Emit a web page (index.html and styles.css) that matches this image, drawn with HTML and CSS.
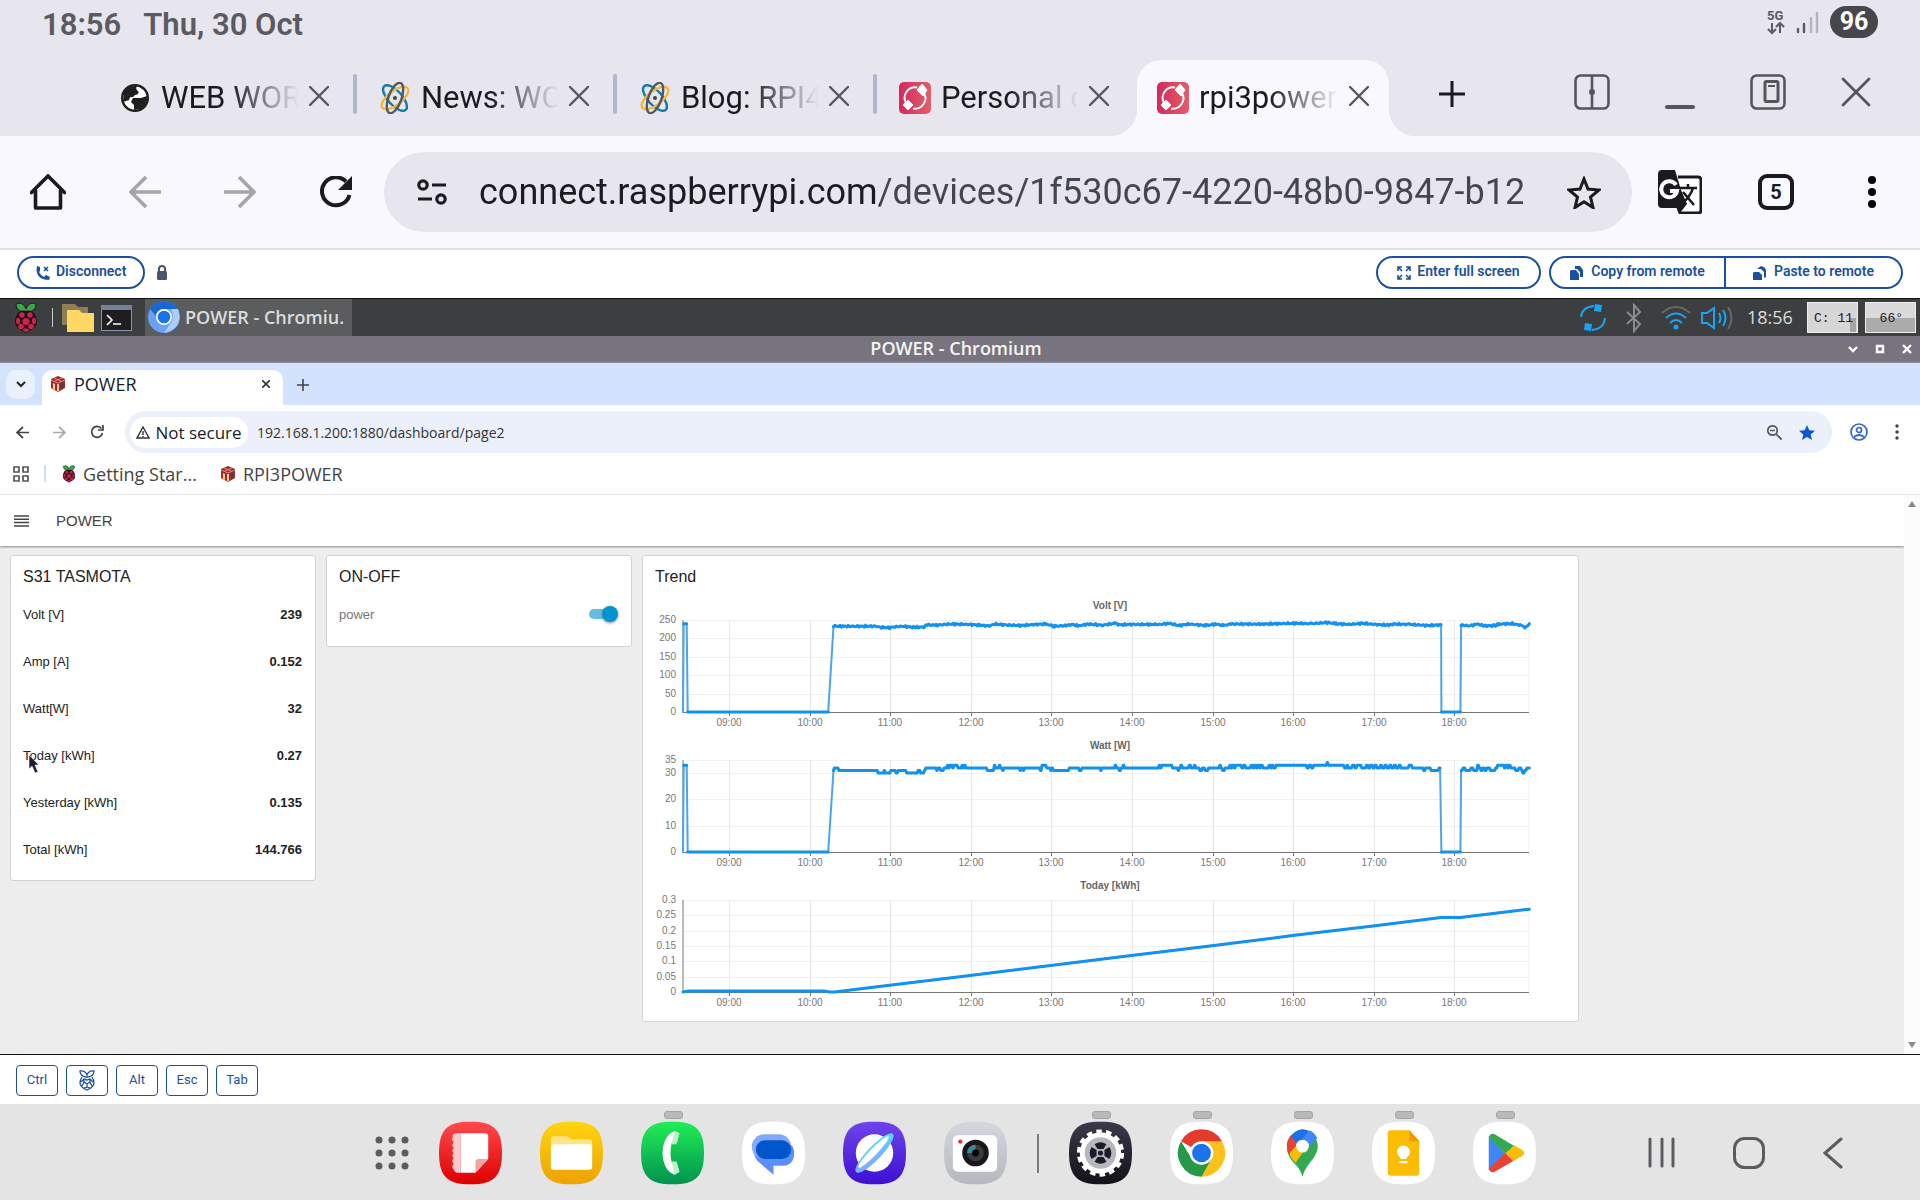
FILE: index.html
```html
<!DOCTYPE html>
<html lang="en">
<head>
<meta charset="utf-8">
<meta name="viewport" content="width=device-width, initial-scale=1">
<title>rpi3power</title>
<link rel="stylesheet" href="styles.css">
</head>
<body>
<svg class="defs" aria-hidden="true">
  <defs>
    <linearGradient id="g-red" x2="0" y2="1"><stop stop-color="#ff4a4c"/><stop offset="1" stop-color="#dc0000"/></linearGradient>
    <linearGradient id="g-yellow" x2="0" y2="1"><stop stop-color="#ffd412"/><stop offset="1" stop-color="#eda200"/></linearGradient>
    <linearGradient id="g-green" x2="0" y2="1"><stop stop-color="#22ee55"/><stop offset="1" stop-color="#009250"/></linearGradient>
    <linearGradient id="g-purple" x2="0" y2="1"><stop stop-color="#7044ea"/><stop offset="1" stop-color="#3c10d2"/></linearGradient>
    <linearGradient id="g-grey" x2="0" y2="1"><stop stop-color="#d5d7de"/><stop offset="1" stop-color="#b4b7be"/></linearGradient>
    <linearGradient id="g-dark" x2="0" y2="1"><stop stop-color="#3a3a4a"/><stop offset="1" stop-color="#121219"/></linearGradient>
    <linearGradient id="g-ring" x1="1" x2="0" y1="0" y2="1"><stop stop-color="#48e8f4"/><stop offset="1" stop-color="#8f9cff"/></linearGradient>
    <linearGradient id="g-pi" x2="1" y2="0"><stop stop-color="#d6285c"/><stop offset="1" stop-color="#e0606a"/></linearGradient>
    <symbol id="squircle" viewBox="0 0 64 64"><path d="M32 0C56 0 64 9 64 32S56 64 32 64 0 55 0 32 8 0 32 0Z"/></symbol>
    <symbol id="close" viewBox="0 0 20 20"><path d="M1 1 19 19M19 1 1 19" fill="none" stroke="currentColor" stroke-width="2.4" stroke-linecap="round"/></symbol>
    <symbol id="atom" viewBox="0 0 32 32"><g fill="none" stroke-width="2.4"><ellipse cx="16" cy="16" rx="16" ry="7" stroke="#1478a8" transform="rotate(48 16 16)"/><ellipse cx="16" cy="16" rx="16" ry="7" stroke="#f4b640" transform="rotate(-38 16 16)"/><ellipse cx="16" cy="16" rx="16" ry="6.500" stroke="#55585c" transform="rotate(-70 16 16)"/></g><circle cx="16" cy="16" r="2" fill="#444"/></symbol>
    <symbol id="connect" viewBox="0 0 32 32"><rect width="32" height="32" rx="5" fill="url(#g-pi)"/><path d="M18 5.500A10.500 10.500 0 0 0 7 21M14 26.500A10.500 10.500 0 0 0 25 11" fill="none" stroke="#fff" stroke-width="2"/><path d="m23 2 5 6-4 6-6-6ZM9 18l5 5-5 5-5-5Z" fill="#fff" stroke="#fff" stroke-linejoin="round"/></symbol>
    <symbol id="berry" viewBox="0 0 24 32"><path d="M2 2Q9-1 12 7 15-1 22 2 22 9 14 10H10Q2 9 2 2Z" fill="#3fa648" stroke="#142a14"/><path d="M12 9C19 7 22 13 23 19 23 26 17 28 12 31 7 28 1 26 1 19 2 13 5 7 12 9Z" fill="#251018"/><g fill="#c7254e"><circle cx="12" cy="19.500" r="3.600"/><circle cx="8" cy="13" r="2.700"/><circle cx="16" cy="13" r="2.700"/><ellipse cx="4" cy="19" rx="2" ry="3.300"/><ellipse cx="20" cy="19" rx="2" ry="3.300"/><circle cx="7" cy="24.500" r="2.800"/><circle cx="17" cy="24.500" r="2.800"/><ellipse cx="12" cy="28" rx="3" ry="1.800"/></g></symbol>
    <symbol id="cube" viewBox="0 0 16 16"><path d="m8 0 7 3v9l-7 4-7-4V3Z" fill="#a12a26"/><path d="m1 4 7 3 7-3M4 2l7 3M12 2 5 5" stroke="#d98c80" stroke-width="1" fill="none"/><path d="M3 7v6l2 1V8ZM7 8v7h2V8Z" fill="#f3c9a4"/><path d="M11 7v6l2-1V6Z" fill="#4a3f62"/></symbol>
  </defs>
</svg>

<header class="status">
  <div class="status-left"><time>18:56</time><span>Thu, 30 Oct</span></div>
  <div class="status-right">
    <svg width="18" height="26" viewBox="0 0 18 26" fill="none" stroke="#5b5a60" stroke-width="2"><text x="0" y="11" class="net">5G</text><path d="M5 14v10M1 20l4 4 4-4M13 24V14M9 18l4-4 4 4"/></svg>
    <svg width="23" height="23" viewBox="0 0 23 23" stroke-width="2.400" stroke-linecap="round"><path d="M2 18v3M8 13v8" stroke="#5b5a60"/><path d="M15 7v14M21 2v19" stroke="#b6b5bb"/></svg>
    <span class="battery">96</span>
  </div>
</header>

<nav class="tabs">
  <div class="tab"><svg class="fav globe" viewBox="0 0 28 28"><circle cx="14" cy="14" r="12.800" fill="#fff" stroke="#1f1f1f" stroke-width="2.400"/><path d="M3 8Q7 1 16 2q-2 3 1 5 2 3-3 4-2 3-5 2l-1 3-6 2ZM12 14h8l6-2q1 8-6 13l-7 1v-5l-3-3Z" fill="#1f1f1f"/></svg><button class="tab-title">WEB WORLD</button><button class="x" aria-label="Close tab"><svg><use href="#close"/></svg></button></div>
  <div class="tab line"><svg class="fav"><use href="#atom"/></svg><button class="tab-title">News: WORLD</button><button class="x" aria-label="Close tab"><svg><use href="#close"/></svg></button></div>
  <div class="tab line"><svg class="fav"><use href="#atom"/></svg><button class="tab-title">Blog: RPI4</button><button class="x" aria-label="Close tab"><svg><use href="#close"/></svg></button></div>
  <div class="tab line"><svg class="fav"><use href="#connect"/></svg><button class="tab-title">Personal devices</button><button class="x" aria-label="Close tab"><svg><use href="#close"/></svg></button></div>
  <div class="tab active"><svg class="fav"><use href="#connect"/></svg><button class="tab-title">rpi3power</button><button class="x" aria-label="Close tab"><svg><use href="#close"/></svg></button></div>
  <button class="new-tab" aria-label="New tab"><svg width="28" height="28" viewBox="0 0 28 28"><path d="M14 1v26M1 14h26" stroke="#1b1b1f" stroke-width="3"/></svg></button>
  <div class="window-buttons">
    <button aria-label="Split"><svg width="36" height="36" viewBox="0 0 36 36" fill="none" stroke="#56555b" stroke-width="2.600"><rect x="1.500" y="1.500" width="33" height="33" rx="5"/><path d="M18 2v32"/><circle cx="18" cy="18" r="3" fill="#56555b" stroke="none"/></svg></button>
    <button aria-label="Minimise"><svg width="30" height="36" viewBox="0 0 30 36"><path d="M2 33h26" stroke="#56555b" stroke-width="4" stroke-linecap="round"/></svg></button>
    <button aria-label="Pop-up view"><svg width="36" height="36" viewBox="0 0 36 36" fill="none" stroke="#56555b" stroke-width="2.600"><rect x="1.500" y="1.500" width="33" height="33" rx="5"/><rect x="15" y="7.500" width="13" height="20" rx="1.500" stroke-width="3"/><path d="M18 12h7" stroke-width="2"/></svg></button>
    <button aria-label="Close"><svg width="30" height="30" viewBox="0 0 30 30"><path d="M2 2l26 26M28 2 2 28" stroke="#56555b" stroke-width="2.800" stroke-linecap="round"/></svg></button>
  </div>
</nav>

<div class="toolbar">
  <div class="nav-buttons">
    <button aria-label="Home"><svg width="36" height="36" viewBox="0 0 36 36" fill="none" stroke="#1b1b1f" stroke-width="3.600" stroke-linejoin="round"><path d="M5.500 16v18h25V16"/><path d="M1.500 18.500 18 2l16.500 16.500" stroke-linecap="round" stroke-linejoin="miter"/></svg></button>
    <button aria-label="Back"><svg width="32" height="32" viewBox="0 0 32 32" fill="none" stroke="#a5a4aa" stroke-width="3.600"><path d="M17 1 2 16l15 15M2 16h30"/></svg></button>
    <button aria-label="Forward"><svg width="32" height="32" viewBox="0 0 32 32" fill="none" stroke="#a5a4aa" stroke-width="3.600"><path d="m15 1 15 15-15 15M30 16H0"/></svg></button>
    <button aria-label="Reload"><svg width="32" height="32" viewBox="0 0 32 32"><path d="M26 5.500A14 14 0 1 0 29.500 19" fill="none" stroke="#1b1b1f" stroke-width="4"/><path d="M32 0v14H18Z" fill="#1b1b1f"/></svg></button>
  </div>
  <div class="omnibox">
    <svg width="30" height="26" viewBox="0 0 30 26" fill="none" stroke="#1b1b1f" stroke-width="3.200"><circle cx="6" cy="6" r="4.200"/><path d="M15 6h14M1 20h14"/><circle cx="24" cy="20" r="4.200"/></svg>
    <input class="url" aria-label="Address" value="connect.raspberrypi.com/devices/1f530c67-4220-48b0-9847-b12">
    <button aria-label="Bookmark"><svg width="34" height="33" viewBox="0 0 34 33"><path d="m17 3 4 10 11 1-8.500 7 2.500 10.500-9-5.700-9 5.700L10.500 21 2 14l11-1Z" fill="none" stroke="#1b1b1f" stroke-width="3"/></svg></button>
  </div>
  <div class="tool-buttons">
    <button aria-label="Translate"><svg width="44" height="44" viewBox="0 0 44 44"><path d="M20 7h20q3 0 3 3v30q0 3-3 3H22l-3-8" fill="#fff" stroke="#1b1b1f" stroke-width="3"/><path d="M4 0h13l6 20 6 14-7 9-2-5H4q-4 0-4-4V4q0-4 4-4Z" fill="#1b1b1f"/><path d="M18 15A8 8 0 1 0 19 21h-7" fill="none" stroke="#fff" stroke-width="4"/><path d="M22 18h17M30 14v4M35 18q-3 10-13 17M25 22l11 13" fill="none" stroke="#1b1b1f" stroke-width="2.600"/></svg></button>
    <button class="count">5</button>
    <button aria-label="Menu"><svg width="8" height="32" viewBox="0 0 8 32"><circle cx="4" cy="4" r="4"/><circle cx="4" cy="16" r="4"/><circle cx="4" cy="28" r="4"/></svg></button>
  </div>
</div>

<div class="remote-bar">
  <button class="pill"><svg width="14" height="14" viewBox="0 0 14 14"><path d="M1 0 4 1v4L3 6q2 4 5 5l2-2 4 2-1 3Q3 14 1 7Q0 4 1 0Z" fill="#1b50a0"/><path d="m8 1 4 4m0-4L8 5" stroke="#1b50a0" stroke-width="1.600"/></svg>Disconnect</button>
  <svg width="12" height="15" viewBox="0 0 12 15"><path d="M3 7V4q0-3 3-3t3 3v3" fill="none" stroke="#4b5568" stroke-width="2"/><rect x="1" y="6" width="10" height="9" rx="1.500" fill="#4b5568"/></svg>
  <span class="grow"></span>
  <button class="pill"><svg width="14" height="14" viewBox="0 0 14 14" fill="none" stroke="#1b50a0" stroke-width="1.600"><path d="M1 5V1h4M9 1h4v4M13 9v4H9M5 13H1V9M1 1l4 4M13 1 9 5M13 13 9 9M1 13l4-4"/></svg>Enter full screen</button>
  <div class="pair">
    <button class="pill"><svg width="13" height="14" viewBox="0 0 13 14" fill="#1b50a0"><path d="m5 0h5l3 4v7h-3V6L7 3H5Z"/><path d="M1 4h5l3 4v6H0V5Z"/></svg>Copy from remote</button>
    <button class="pill"><svg width="13" height="14" viewBox="0 0 13 14" fill="#1b50a0"><path d="M1 6h5l3 3v5H0V7Z"/><path d="m4 3 4-3q5 1 5 5v6l-2 1V6L8 3Z"/></svg>Paste to remote</button>
  </div>
</div>

<main class="desktop">
  <div class="panel">
    <button aria-label="Menu"><svg width="24" height="32"><use href="#berry"/></svg></button>
    <i class="panel-line"></i>
    <button aria-label="Files"><svg width="32" height="28" viewBox="0 0 32 28"><path d="M0 0h13l3 3h10v18H0Z" fill="#8f8054"/><path d="M5 6h12l3 3h12v19H5Z" fill="#ffd764"/></svg></button>
    <button aria-label="Terminal"><svg width="31" height="26" viewBox="0 0 31 26"><rect x=".5" y=".5" width="30" height="25" fill="#1e1e1e" stroke="#8497b0"/><path d="M0 0h31v5H0Z" fill="#71829a"/><path d="m6 10 5 5-5 5M12 19h8" fill="none" stroke="#fff" stroke-width="1.600"/></svg></button>
    <button class="task"><svg width="32" height="32" viewBox="0 0 32 32"><circle cx="16" cy="16" r="16" fill="#68a0f4"/><path d="M2 8Q7 0 16 0t14 8H16q-7 0-8 7Z" fill="#1967d2"/><path d="M30 8q6 19-14 24l8-12q2-6-1-12Z" fill="#aecbfa"/><circle cx="16" cy="16" r="8" fill="#fff"/><circle cx="16" cy="16" r="6.300" fill="#1a73e8"/></svg>POWER - Chromiu.</button>
    <span class="grow"></span>
    <div class="tray">
      <svg width="26" height="30" viewBox="0 0 26 30"><path d="M14 3Q2 4 1 14M12 27q12-1 13-12" fill="none" stroke="#1aa4f4" stroke-width="2"/><path d="m15 1 7 1-1 7-7-1ZM5 20l7 1-1 7-7-1Z" fill="#1aa4f4"/></svg>
      <svg width="16" height="30" viewBox="0 0 16 30"><path d="m1 9 13 12-6 7V2l6 7L1 21" fill="none" stroke="#8a8b8c" stroke-width="2"/></svg>
      <svg width="30" height="26" viewBox="0 0 30 26" fill="none" stroke="#1aa4f4" stroke-width="2"><path d="M1 8q14-12 28 0" stroke="#66696a"/><path d="M5 13q10-9 20 0M9 18q6-6 12 0"/><circle cx="15" cy="22" r="1.500" fill="#1aa4f4"/></svg>
      <svg width="33" height="24" viewBox="0 0 33 24" fill="none" stroke="#1aa4f4" stroke-width="2"><path d="M1 7h5l7-5v20l-7-5H1ZM18 7q3 5 0 10M22 4q5 8 0 16"/><path d="M27 1q7 11 0 22" stroke="#66696a"/></svg>
      <time>18:56</time>
      <span class="meter cpu">C: 11</span><span class="meter temp">66°</span>
    </div>
  </div>
  <div class="titlebar">
    <span></span><span>POWER - Chromium</span>
    <div class="title-buttons">
      <button aria-label="Minimise"><svg width="10" height="10" viewBox="0 0 10 10"><path d="m1 3 4 4 4-4"/></svg></button>
      <button aria-label="Maximise"><svg width="10" height="10" viewBox="0 0 10 10"><path d="M2 2h6v6H2Z"/></svg></button>
      <button aria-label="Close"><svg width="10" height="10" viewBox="0 0 10 10"><path d="m1 1 8 8m0-8L1 9"/></svg></button>
    </div>
  </div>
  <div class="c-tabs">
    <button class="c-search" aria-label="Search tabs"><svg width="10" height="8" viewBox="0 0 10 8"><path d="m1 1 4 4 4-4" fill="none" stroke="#222" stroke-width="2"/></svg></button>
    <div class="c-tab"><svg width="16" height="16"><use href="#cube"/></svg><span>POWER</span><button aria-label="Close tab"><svg width="8" height="8" viewBox="0 0 8 8"><path d="m0 0 8 8M8 0 0 8" stroke="#333" stroke-width="1.600"/></svg></button></div>
    <button aria-label="New tab"><svg width="12" height="12" viewBox="0 0 12 12"><path d="M6 0v12M0 6h12" stroke="#444" stroke-width="1.600"/></svg></button>
  </div>
  <div class="c-toolbar">
    <div class="c-nav">
      <button aria-label="Back"><svg width="13" height="13" viewBox="0 0 13 13"><path d="M7 1 1 6.500 7 12M1 6.500h12"/></svg></button>
      <button aria-label="Forward"><svg class="off" width="13" height="13" viewBox="0 0 13 13"><path d="m6 1 6 5.500L6 12m6-5.500H0"/></svg></button>
      <button aria-label="Reload"><svg width="14" height="14" viewBox="0 0 14 14"><path d="M11.500 3.500A5.500 5.500 0 1 0 12.500 8M13 0v5H8"/></svg></button>
    </div>
    <div class="c-omnibox">
      <button class="chip"><svg width="14" height="13" viewBox="0 0 14 13"><path d="m7 1 6 11H1ZM7 5v4M7 10v1" fill="none" stroke="#333" stroke-width="1.400"/></svg>Not secure</button>
      <input class="c-url" aria-label="Remote address" value="192.168.1.200:1880/dashboard/page2">
      <button aria-label="Zoom"><svg width="15" height="15" viewBox="0 0 15 15" fill="none" stroke="#555" stroke-width="1.700"><circle cx="5.500" cy="5.500" r="4.700"/><path d="m9 9 5.500 5.500M3 5.500h5"/></svg></button>
      <button aria-label="Edit bookmark"><svg width="16" height="15" viewBox="0 0 16 15"><path d="m8 0 2.300 5.300 5.700.500-4.300 3.700L13 15l-5-3-5 3 1.300-5.500L0 5.800l5.700-.5Z" fill="#0b57d0"/></svg></button>
    </div>
    <button aria-label="Profile"><svg width="18" height="18" viewBox="0 0 18 18" fill="none" stroke="#2f69c9" stroke-width="1.700"><circle cx="9" cy="9" r="8"/><circle cx="9" cy="7" r="2.500"/><path d="M4 14q5-4 10 0"/></svg></button>
    <button aria-label="Menu"><svg width="4" height="16" viewBox="0 0 4 16" fill="#444"><circle cx="2" cy="2" r="1.700"/><circle cx="2" cy="8" r="1.700"/><circle cx="2" cy="14" r="1.700"/></svg></button>
  </div>
  <div class="bookmarks">
    <button aria-label="Apps"><svg width="16" height="16" viewBox="0 0 16 16" fill="none" stroke="#555" stroke-width="1.700"><path d="M1 1h5v5H1ZM10 1h5v5h-5ZM1 10h5v5H1ZM10 10h5v5h-5Z"/></svg></button>
    <i></i>
    <a href="#start"><svg width="14" height="18"><use href="#berry"/></svg>Getting Star...</a>
    <a href="#power"><svg width="16" height="16"><use href="#cube"/></svg>RPI3POWER</a>
  </div>
  <div class="viewport">
    <div class="page">
      <header class="page-head"><button aria-label="Menu"><svg width="15" height="12" viewBox="0 0 15 12"><path d="M0 1h15M0 4.300h15M0 7.600h15M0 11h15" stroke="#444" stroke-width="1.500"/></svg></button><h1>POWER</h1></header>
      <div class="cards">
        <section class="card readings">
          <h2>S31 TASMOTA</h2>
          <dl>
            <div><dt>Volt [V]</dt><dd>239</dd></div>
            <div><dt>Amp [A]</dt><dd>0.152</dd></div>
            <div><dt>Watt[W]</dt><dd>32</dd></div>
            <div class="hovered"><dt>Today [kWh]</dt><dd>0.27</dd><svg class="cursor" width="12" height="20" viewBox="0 0 12 20"><path d="M0 0v14l3-3 3 7 3-1-3-7h4Z" fill="#1d1c38" stroke="#fff" stroke-width=".6"/></svg></div>
            <div><dt>Yesterday [kWh]</dt><dd>0.135</dd></div>
            <div><dt>Total [kWh]</dt><dd>144.766</dd></div>
          </dl>
        </section>
        <section class="card switch-card">
          <h2>ON-OFF</h2>
          <label class="switch">power<input type="checkbox" checked></label>
        </section>
        <section class="card trend">
          <h2>Trend</h2>
          <svg class="chart" id="volt" viewBox="0 0 910 140"></svg>
          <svg class="chart" id="watt" viewBox="0 0 910 140"></svg>
          <svg class="chart" id="today" viewBox="0 0 910 140"></svg>
        </section>
      </div>
    </div>
    <div class="scroll"><svg width="8" height="6" viewBox="0 0 8 6"><path d="m4 0 4 6H0Z" fill="#8a8a8a"/></svg><svg width="8" height="6" viewBox="0 0 8 6"><path d="m4 6 4-6H0Z" fill="#8a8a8a"/></svg></div>
  </div>
</main>

<div class="keys">
  <button>Ctrl</button>
  <button aria-label="Raspberry"><svg width="16" height="21" viewBox="0 0 16 21" fill="none" stroke="#1b50a0" stroke-width="1.300"><path d="M1 1q5-1 7 4 2-5 7-4 0 5-6 6H7Q1 6 1 1Z"/><path d="M3 7q-2 3-2 6 0 4 7 7 7-3 7-7 0-3-2-6M2 12l3-3 3 1 3-1 3 3M5 9v3l3 2 3-2V9M8 14v3l-3 1M8 17l3 1M5 12l-2 4M11 12l2 4"/></svg></button>
  <button>Alt</button><button>Esc</button><button>Tab</button>
</div>

<footer class="dock">
  <div class="apps">
    <button class="all" aria-label="All apps"><svg width="34" height="34" viewBox="0 0 34 34" fill="#5c5b60"><circle cx="4" cy="4" r="3.500"/><circle cx="17" cy="4" r="3.500"/><circle cx="30" cy="4" r="3.500"/><circle cx="4" cy="17" r="3.500"/><circle cx="17" cy="17" r="3.500"/><circle cx="30" cy="17" r="3.500"/><circle cx="4" cy="30" r="3.500"/><circle cx="17" cy="30" r="3.500"/><circle cx="30" cy="30" r="3.500"/></svg></button>
    <button class="app" aria-label="Notes"><svg viewBox="0 0 64 64"><use href="#squircle" fill="url(#g-red)"/><path d="M22 12h-5q-4 1-3 4-2 2 1 5-3 3 0 6-3 3 0 5-3 3 0 5-3 3 0 6-3 3 0 6 1 3 4 3h3Z" fill="#ffc9ca"/><path d="M22 12h25q3 0 3 3v23L37 52H22Z" fill="#fff"/><path d="M50 38 37 52V41q0-3 3-3Z" fill="#f89fa2"/></svg></button>
    <button class="app" aria-label="My files"><svg viewBox="0 0 64 64"><use href="#squircle" fill="url(#g-yellow)"/><path d="M11 25v-7q0-3 3-3h14l4 3h18q3 0 3 4v5Z" fill="#ffe588"/><rect x="11" y="23" width="42" height="26" rx="3" fill="#fff"/></svg></button>
    <button class="app on" aria-label="Phone"><svg viewBox="0 0 64 64"><use href="#squircle" fill="url(#g-green)"/><path d="m34 10 5 2-3 10h-5q-2 10 0 19h5l3 10-5 3C18 49 18 15 34 10Z" fill="#fff"/><path d="m34 10 5 2-3 11h-5ZM31 41h5l3 10-5 3Z" fill="#bdf2c9"/></svg></button>
    <button class="app" aria-label="Messages"><svg viewBox="0 0 64 64"><use href="#squircle" fill="#fff"/><path d="M10 23q2 16 9 20l13 11V45h10Q53 44 53 32q0-9-9-12Z" fill="#5b8fff"/><rect x="10" y="13" width="40" height="25" rx="12.500" fill="#82a9ff"/><rect x="14" y="19" width="36" height="19" rx="9.500" fill="#0057cc"/></svg></button>
    <button class="app" aria-label="Internet"><svg viewBox="0 0 64 64"><use href="#squircle" fill="url(#g-purple)"/><circle cx="32" cy="32" r="19" fill="#fff"/><ellipse cx="32" cy="32" rx="27" ry="7" transform="rotate(-46 32 32)" fill="url(#g-ring)"/><ellipse cx="31" cy="31" rx="22" ry="3.500" transform="rotate(-46 31 31)" fill="#fff"/></svg></button>
    <button class="app" aria-label="Camera"><svg viewBox="0 0 64 64"><use href="#squircle" fill="url(#g-grey)"/><rect x="9" y="14" width="45" height="37" rx="5" fill="#fff"/><circle cx="32" cy="32" r="13.500" fill="#18181a"/><circle cx="32" cy="32" r="8.500" fill="#3b3a40"/><path d="M23.500 32a8.500 8.500 0 0 1 8.500-8.500V32Z" fill="#4088a0"/><circle cx="32" cy="32" r="3.500" fill="#050505"/><circle cx="16.500" cy="20.500" r="2.200" fill="#f03030"/></svg></button>
    <i class="dock-line"></i>
    <button class="app on" aria-label="Settings"><svg viewBox="0 0 64 64"><use href="#squircle" fill="url(#g-dark)"/><circle cx="32" cy="32" r="21" fill="#fff"/><circle cx="32" cy="32" r="21.500" fill="none" stroke="#fff" stroke-width="5" stroke-dasharray="5.500 4.150"/><circle cx="32" cy="32" r="16" fill="#b7b8be"/><path d="M26 23q6-4 12 0l-3 5h-6ZM26 41q6 4 12 0l-3-5h-6ZM23 26q-4 6 0 12l5-3v-6ZM41 26q4 6 0 12l-5-3v-6Z" fill="#1c1c28"/><circle cx="32" cy="32" r="2.600" fill="#1c1c28"/></svg></button>
    <button class="app on" aria-label="Chrome"><svg viewBox="0 0 64 64"><use href="#squircle" fill="#fff"/><path d="M32 32 11.200 20A24 24 0 0 1 52.800 20Z" fill="#e33b2e"/><path d="M32 32V20H52.800A24 24 0 0 1 32 56Z" fill="#fcc21b"/><path d="m42 38-10 18A24 24 0 0 1 11.200 20l11 18Z" fill="#279847"/><circle cx="32" cy="32" r="12" fill="#fff"/><circle cx="32" cy="32" r="9.500" fill="#1a73e8"/></svg></button>
    <button class="app on" aria-label="Maps"><svg viewBox="0 0 64 64"><use href="#squircle" fill="#fff"/><path d="M32 56c-2-8-7-12-12-18-6-9-4-18 0-23 6-9 20-9 25 1 4 8 3 13-1 20-5 7-9 10-12 20Z" fill="#34a853"/><path d="M20 15 44 15 25 42q-4-4-6-8Z" fill="#fbbc04"/><path d="M20 14q-7 9-2 19l12-13Z" fill="#ea4335"/><path d="M20 15q10-12 20-4L28 24Z" fill="#1a73e8"/><path d="m39 9-12 14 6 8 14-14Q44 11 39 9Z" fill="#4285f4"/><circle cx="32" cy="25" r="6.500" fill="#fff"/></svg></button>
    <button class="app on" aria-label="Keep"><svg viewBox="0 0 64 64"><use href="#squircle" fill="#fff"/><path d="M19 9h19l10 11v32q0 3-3 3H19q-3 0-3-3V12q0-3 3-3Z" fill="#fbbc04"/><path d="M38 9v11h10Z" fill="#f29900"/><circle cx="32" cy="31" r="6.500" fill="#fff"/><path d="M29 35h6v3h-6ZM28 40h8v2.500h-8Z" fill="#fff"/></svg></button>
    <button class="app on" aria-label="Play Store"><svg viewBox="0 0 64 64"><use href="#squircle" fill="#fff"/><path d="M16 15v35l17-17Z" fill="#4285f4"/><path d="M16 16q2-5 6-3l20 12-9 8Z" fill="#34a853"/><path d="M16 48q2 5 6 3l19-11-8-8Z" fill="#ea4335"/><path d="m42 24 8 5q4 3 0 6l-9 5-8-8Z" fill="#fbbc04"/></svg></button>
  </div>
  <div class="sys">
    <button aria-label="Recents"><svg width="27" height="32" viewBox="0 0 27 32" stroke="#5c5b60" stroke-width="3" stroke-linecap="round"><path d="M2 2v27M14 2v27M25 2v27"/></svg></button>
    <button aria-label="Home"><svg width="32" height="32" viewBox="0 0 32 32"><rect x="1.500" y="1.500" width="29" height="29" rx="10" fill="none" stroke="#5c5b60" stroke-width="3"/></svg></button>
    <button aria-label="Back"><svg width="20" height="32" viewBox="0 0 20 32"><path d="M18 2 2 16l16 14" fill="none" stroke="#5c5b60" stroke-width="3" stroke-linecap="round"/></svg></button>
  </div>
</footer>
<script src="charts.js"></script>
</body>
</html>
```

FILE: charts.js
```js
// Each series is a list of [time, value]; time is in quarter minutes from the first sample.
const LEFT = 28, RIGHT = 874, TOP = 31, BOTTOM = 123, SPAN = 2540;

function steps(text) {
  return text.trim().split(/\s+/).map(p => p.split(':').map(Number));
}

function hold(list) {
  const out = [];
  list.forEach(([t, v], i) => {
    if (i && t - list[i - 1][0] > 3) out.push([t - 3, list[i - 1][1]]);
    out.push([t, v]);
  });
  return out;
}

const idle = [[0, 0], [2, null], [11, null], [14, 0], [436, 0]];
const start = v => idle.map(([t, y]) => [t, y === null ? v : y]);

const watt = start(33).concat(hold(steps(`
452:31 455:32 468:31 586:30 604:31 608:30 624:31 640:30 646:31 672:30 706:31 714:30 725:31 729:32
762:31 766:32 774:31 784:32 794:33 798:32 802:33 810:32 814:33 826:32 838:33 842:32 846:33 850:32
914:31 935:33 939:32 950:33 954:32 960:31 964:32 1012:31 1016:32 1022:31 1026:32 1073:31 1078:33
1092:32 1104:31 1108:32 1112:31 1160:32 1190:31 1198:32 1254:31 1258:32 1298:33 1302:32 1310:31
1316:32 1322:33 1326:32 1430:33 1434:32 1438:33 1470:32 1487:31 1491:32 1495:33 1500:32 1520:33
1526:32 1536:33 1540:32 1552:31 1560:32 1568:31 1578:32 1612:33 1616:32 1620:31 1628:32 1642:33
1646:32 1650:33 1656:32 1660:33 1678:32 1684:33 1690:32 1706:33 1712:32 1716:33 1722:32 1726:33
1732:32 1736:33 1742:32 1760:33 1766:32 1770:33 1774:32 1781:33 1874:32 1880:33 1888:32 1894:33
1934:34 1938:33 1986:32 1994:33 1998:32 2010:33 2018:32 2024:33 2038:32 2052:33 2058:32 2064:33
2072:32 2078:33 2084:32 2094:33 2100:32 2108:33 2114:32 2122:33 2128:32 2136:33 2142:32 2150:33
2156:32 2180:33 2190:32 2224:31 2230:32 2246:31 2270:32 2273:32`)),
  [[2277, 0], [2334, 0]], hold(steps(`
2336:31 2342:32 2350:31 2366:32 2374:31 2386:33 2391:32 2396:31 2402:32 2408:31 2414:32 2424:31
2440:32 2446:33 2466:32 2470:33 2476:32 2480:33 2486:32 2500:31 2510:32 2518:31 2522:30 2527:31
2534:32 2541:32`)));

const voltLevels = steps(`
452:234 468:233 580:233 592:230 620:229 632:231 660:233 695:230 724:231 730:237 760:236 800:239
860:238 920:234 936:239 960:237 1012:235 1060:238 1090:239 1115:233 1150:235 1170:238 1188:234
1215:239 1260:236 1298:241 1310:237 1342:238 1430:238 1460:241 1488:235 1520:239 1570:235 1600:239
1622:235 1645:239 1740:239 1840:241 1886:240 1934:243 1960:240 2000:238 2040:241 2080:238 2115:236
2130:239 2180:238 2240:235 2276:237`);
const voltTail = steps('2336:236 2360:234 2386:239 2405:234 2440:235 2450:239 2490:240 2515:236 2530:230 2541:240');

function ripple(levels) {
  const out = [];
  for (let i = 0; i < levels.length - 1; i++) {
    const [a, va] = levels[i], [b, vb] = levels[i + 1];
    for (let t = a; t < b; t += 4) {
      out.push([t, va + (vb - va) * (t - a) / (b - a) + 3 * Math.sin(t * 1.7) * Math.sin(t * 0.61)]);
    }
  }
  return out.concat([levels[levels.length - 1]]);
}
const volt = start(240).concat(ripple(voltLevels), [[2277, 0], [2334, 0]], ripple(voltTail));

const today = [[0, 0], [14, 0.003], [425, 0.003], [440, 0], [455, 0], [620, 0.022], [862, 0.054],
  [1104, 0.086], [1346, 0.119], [1588, 0.151], [1830, 0.184], [2072, 0.215], [2276, 0.243],
  [2334, 0.243], [2420, 0.254], [2541, 0.27]];

function draw(id, title, max, ticks, data) {
  const px = t => LEFT + t * (RIGHT - LEFT) / SPAN;
  const py = v => BOTTOM - v * (BOTTOM - TOP) / max;
  let s = `<text class="chart-title" x="455" y="20">${title}</text>`;
  ticks.forEach(v => {
    const y = Math.round(py(v));
    s += `<path class="grid-line" d="M${LEFT} ${y}.5H${RIGHT}"/><text class="y-label" x="21" y="${y + 3}">${v}</text>`;
  });
  for (let h = 9; h <= 18; h++) {
    const x = Math.round(px(138 + (h - 9) * 242));
    s += `<path class="grid-line hour" d="M${x}.5 ${TOP}V${BOTTOM}"/><path class="axis" d="M${x}.5 ${BOTTOM}v4"/>`;
    s += `<text class="x-label" x="${x}" y="137">${String(h).padStart(2, '0')}:00</text>`;
  }
  s += `<path class="grid-line" d="M${RIGHT} ${TOP}V${BOTTOM}"/>`;
  s += `<path class="axis" d="M${LEFT} ${TOP}V${BOTTOM}.5H${RIGHT}"/>`;
  let flat = '', all = '';
  data.forEach(([t, v], i) => {
    const p = px(t).toFixed(1) + ' ' + py(v).toFixed(1);
    all += (i ? 'L' : 'M') + p;
    const steep = !i || Math.abs(py(v) - py(data[i - 1][1])) > 20;
    flat += (steep ? 'M' : 'L') + p;
  });
  s += `<path class="series thin" d="${all}"/><path class="series" d="${flat}"/>`;
  document.getElementById(id).innerHTML = s;
}

draw('volt', 'Volt [V]', 250, [0, 50, 100, 150, 200, 250], volt);
draw('watt', 'Watt [W]', 35, [0, 10, 20, 30, 35], watt);
draw('today', 'Today [kWh]', 0.3, [0, 0.05, 0.1, 0.15, 0.2, 0.25, 0.3], today);
```

FILE: styles.css
```css
* { box-sizing: border-box; }
body { margin: 0; min-height: 100vh; display: flex; flex-direction: column; font-family: Roboto, sans-serif; background: #fff; color: #1b1b1f; overflow-x: hidden; }
button { border: 0; padding: 0; margin: 0; background: none; font: inherit; color: inherit; display: flex; align-items: center; justify-content: center; }
input { border: 0; padding: 0; margin: 0; background: none; font: inherit; color: inherit; min-width: 0; }
svg { display: block; flex: none; }
h1, h2, dl, dd { margin: 0; font-weight: 400; }
.defs { position: absolute; width: 0; height: 0; }
.grow { flex: 1; }

.status { display: flex; justify-content: space-between; height: 60px; padding: 6px 42px 0; background: #e7e5ee; color: #5b5a60; }
.status-left { display: flex; gap: 22px; font: 600 31px/38px Roboto, sans-serif; }
.status-right { display: flex; gap: 11px; height: 32px; align-items: center; }
.net { font: 700 13px Roboto, sans-serif; fill: #5b5a60; stroke: none; }
.battery { width: 48px; height: 32px; border-radius: 16px; background: #47464a; color: #fff; font: 700 25px/32px Roboto, sans-serif; text-align: center; }

.tabs { display: flex; height: 76px; padding-left: 97px; background: #e7e5ee; }
.tab { position: relative; width: 260px; height: 76px; padding: 0 28px 0 22px; display: flex; align-items: center; gap: 10px; }
.tab.line::before { content: ""; position: absolute; left: -4px; top: 14px; width: 4px; height: 40px; border-radius: 2px; background: #b1b6cf; }
.tab.active { width: 252px; padding: 0 20px; background: #f9f8ff; border-radius: 24px 24px 0 0; }
.tab.active::before, .tab.active::after { content: ""; position: absolute; bottom: 0; width: 28px; height: 28px; }
.tab.active::before { right: 100%; background: radial-gradient(circle at 0 0, #e7e5ee 28px, #f9f8ff 29px); }
.tab.active::after { left: 100%; background: radial-gradient(circle at 100% 0, #e7e5ee 28px, #f9f8ff 29px); }
.fav { width: 32px; height: 32px; }
.fav.globe { padding: 2px; }
.tab-title { flex: 1; overflow: hidden; justify-content: flex-start; white-space: nowrap; font-size: 31px; line-height: 40px; mask-image: linear-gradient(90deg, #000 50%, transparent); }
.x { color: #56555b; padding-bottom: 4px; }
.x svg { width: 20px; height: 20px; }
.new-tab { margin-left: 49px; height: 68px; }
.window-buttons { margin-left: auto; padding-right: 49px; height: 64px; display: flex; align-items: center; gap: 55px; }

.toolbar { display: flex; align-items: center; height: 112px; background: #f9f8ff; }
.nav-buttons { display: flex; align-items: center; gap: 63px; padding: 0 32px 0 30px; }
.nav-buttons button:last-child { margin-left: 1px; }
.omnibox { flex: 1; height: 80px; border-radius: 40px; background: #e7e5ee; display: flex; align-items: center; padding: 0 31px 0 33px; }
.url { flex: 1; margin: 0 44px 0 32px; height: 60px; font-size: 36px; color: #44464f; background: linear-gradient(90deg, #1b1b22 401px, #44464f 401px) text; -webkit-text-fill-color: transparent; }
.tool-buttons { display: flex; align-items: center; padding: 0 44px 0 26px; }
.count { width: 36px; height: 36px; margin: 0 74px 0 56px; border: 4px solid #1b1b1f; border-radius: 9px; font: 700 20px/28px Roboto, sans-serif; }

.remote-bar { display: flex; align-items: center; gap: 8px; height: 50px; padding: 0 17px 3px; border-top: 2px solid #e0dfe7; background: #fff; }
.remote-bar > svg { margin-left: 3px; }
.pill { height: 33px; padding: 0 17px 3px; border: 2px solid #1b50a0; border-radius: 17px; gap: 6px; font: 600 14px/20px Roboto, sans-serif; color: #1b50a0; }
.pill svg { position: relative; top: 2px; }
.grow + .pill { width: 165px; }
.pair { display: flex; }
.pair .pill { width: 177px; gap: 8px; padding: 0 0 3px; }
.pair .pill:first-child { border-radius: 17px 0 0 17px; }
.pair .pill:last-child { border-radius: 0 17px 17px 0; border-left: 0; }

.desktop { flex: 1; display: flex; flex-direction: column; border-top: 1px solid #111; border-bottom: 1px solid #111; font-family: "Open Sans", sans-serif; }
.panel { display: flex; align-items: center; height: 37px; padding: 0 4px 0 14px; background: #3c3e40; color: #dcdcdc; }
.panel-line { width: 1px; height: 19px; margin: 0 9px 0 14px; background: #ccc; }
.panel button { margin-right: 7px; }
.panel > button:first-child { margin: 0; }
.panel .task { width: 207px; height: 37px; margin: 0 0 0 6px; padding: 0 0 2px 3px; gap: 5px; justify-content: flex-start; background: #5b5c5d; font-size: 18px; font-weight: 600; white-space: nowrap; }
.tray { display: flex; align-items: center; }
.tray > svg { margin-right: 13px; }
.tray svg:nth-child(1) { margin-right: 20px; }
.tray svg:nth-child(2) { margin-right: 19px; }
.tray svg:nth-child(3) { margin-right: 10px; }
.tray time { width: 47px; margin-right: 13px; padding-bottom: 2px; font: 500 18px/24px "Open Sans", sans-serif; }
.meter { width: 51px; height: 31px; margin-left: 7px; padding-right: 4px; text-align: right; color: #222; font: 400 13px/32px "Liberation Mono", monospace; border: 1px solid #eee; }
.tray .cpu { margin-left: 0; background: linear-gradient(#a6a6a6, #a6a6a6) 42px 100%/6px 14px no-repeat, #d6d6d6; }
.temp { padding-right: 12px; background: linear-gradient(#dadada 50%, #ababab 50%); }
.titlebar { display: grid; grid-template-columns: 1fr auto 1fr; align-items: center; height: 27px; padding-right: 8px; border-bottom: 1px solid #918e98; background: #77747f; color: #f4f4f4; font-weight: 600; font-size: 18px; line-height: 24px; }
.titlebar span { padding-bottom: 2px; }
.title-buttons { display: flex; justify-content: flex-end; gap: 17px; }
.title-buttons path { fill: none; stroke: #fff; stroke-width: 2.4; }

.c-tabs { display: flex; align-items: flex-end; height: 42px; padding-left: 6px; background: #d3e2fd; }
.c-search { width: 29px; height: 29px; margin: 0 7px 6px 0; border-radius: 10px; background: #e9f1fe; }
.c-tab { display: flex; align-items: center; gap: 8px; width: 241px; height: 35px; padding: 0 13px 7px 8px; margin-right: 14px; border-radius: 10px 10px 0 0; background: #fff; font-size: 18px; font-weight: 500; }
.c-tab span { flex: 1; line-height: 24px; }
.c-tabs > button:last-child { height: 29px; margin-bottom: 6px; }
.c-toolbar { display: flex; align-items: center; height: 54px; padding-right: 21px; }
.c-toolbar > button { margin-left: 18px; }
.c-toolbar > button:nth-last-child(2) { margin-right: 9px; }
.c-nav { display: flex; align-items: center; gap: 24px; padding: 0 21px 0 16px; }
.c-nav path { fill: none; stroke: #444; stroke-width: 1.7; }
.c-nav .off path { stroke: #aaa; }
.c-omnibox { flex: 1; display: flex; align-items: center; height: 42px; padding: 0 17px 0 5px; border-radius: 21px; background: #ebf0fa; gap: 9px; }
.chip { height: 31px; width: 118px; gap: 5px; border-radius: 15px; background: #fff; font-size: 17px; white-space: nowrap; }
.c-url { flex: 1; height: 30px; font-size: 14px; font-weight: 500; color: #333; }
.c-omnibox button:last-child { margin-left: 8px; }
.bookmarks { display: flex; align-items: center; height: 36px; padding: 0 13px 6px; border-bottom: 1px solid #e8e8e8; font-size: 18px; font-weight: 500; color: #444; }
.bookmarks i { width: 2px; height: 17px; margin: 0 16px 0 15px; background: #cfe0fa; }
.bookmarks a { display: flex; align-items: center; gap: 7px; margin-right: 23px; color: inherit; text-decoration: none; }

.viewport { flex: 1; display: flex; font-family: "Liberation Sans", Arial, sans-serif; }
.page { flex: 1; background: #ededed; }
.page-head { display: flex; align-items: center; gap: 27px; height: 51px; padding-left: 14px; background: #fff; box-shadow: 0 1px 2px #888; }
.page-head h1 { font-size: 15px; color: #444; }
.scroll { display: flex; flex-direction: column; justify-content: space-between; align-items: center; width: 16px; padding: 6px 0; background: #fcfcfc; }
.cards { display: flex; align-items: flex-start; gap: 10px; padding: 9px 10px; }
.card { width: 306px; border: 1px solid #d3d3d3; border-radius: 3px; background: #fff; padding: 12px 13px 0 12px; color: #222; }
.card h2 { font-size: 16px; line-height: 18px; }
.readings { height: 326px; }
.readings dl { padding-top: 7px; }
.readings dl div { position: relative; display: flex; justify-content: space-between; height: 47px; font-size: 13px; line-height: 44px; }
.readings dd { font-weight: 700; }
.cursor { position: absolute; left: 6px; top: 21px; }
.switch-card { height: 92px; }
.switch { display: flex; justify-content: space-between; align-items: center; height: 56px; font-size: 13px; color: #777; }
.switch input { appearance: none; position: relative; width: 27px; height: 10px; margin-right: 2px; border-radius: 5px; background: #66bbe2; }
.switch input::after { content: ""; position: absolute; right: -2px; top: -3px; width: 16px; height: 16px; border-radius: 8px; background: #0094d0; box-shadow: 0 1px 3px #888; }
.trend { width: 937px; height: 467px; }
.trend h2 { margin-bottom: 3px; }
.chart { width: 910px; height: 140px; }
.chart-title { font-weight: 700; font-size: 10px; fill: #666; text-anchor: middle; }
.x-label { font-size: 10px; fill: #777; text-anchor: middle; }
.y-label { font-size: 10px; fill: #777; text-anchor: end; }
.grid-line { stroke: #f1f1f1; }
.hour { stroke: #e9e9e9; }
.axis { fill: none; stroke: #777; }
.series { fill: none; stroke: #1292ee; stroke-width: 3; stroke-linejoin: round; stroke-linecap: round; }
.thin { stroke: #4aa5ec; stroke-width: 2; }

.keys { display: flex; gap: 8px; height: 49px; padding: 10px 16px; background: #fff; }
.keys button { width: 42px; height: 31px; padding-bottom: 3px; border: 1px solid #1b50a0; border-radius: 4px; font-size: 13px; color: #1b50a0; }
.keys button:nth-child(2) { padding: 0; }
.dock { display: grid; grid-template-columns: 1fr auto 1fr; align-items: center; height: 96px; padding: 2px 0 0; background: #e4e4e4; }
.apps { grid-column: 2; display: flex; align-items: center; gap: 38px; margin-right: 9px; }
.all { margin: 0 -8px 0 0; }
.app { position: relative; width: 63px; height: 64px; }
.app svg { width: 63px; height: 64px; }
.app.on::before { content: ""; position: absolute; top: -10px; left: 23px; width: 17px; height: 6px; border-radius: 3px; background: #b9b9b9; border: 1px solid #a4a4a4; }
.dock-line { width: 2px; height: 39px; margin: 0 -8px; background: #7b7b7b; }
.sys { display: flex; align-items: center; justify-content: flex-end; gap: 58px; padding-right: 77px; }
```
